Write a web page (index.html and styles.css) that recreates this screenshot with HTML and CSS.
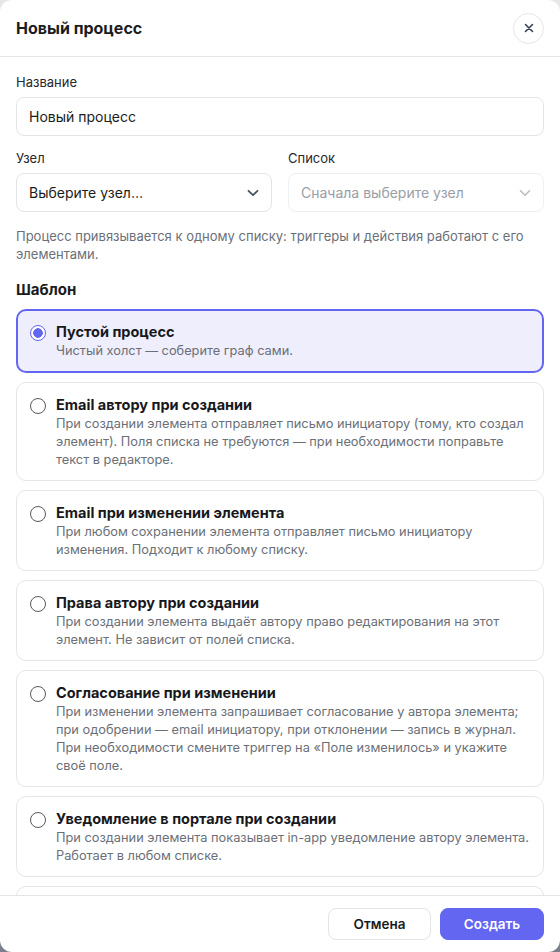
FILE: index.html
```html
<!DOCTYPE html>
<html lang="ru">
<head>
  <meta charset="UTF-8" />
  <meta name="viewport" content="width=device-width, initial-scale=1.0"/>
  <title>Новый процесс</title>
  <link rel="stylesheet" href="styles.css">
</head>
<body>
  <div class="modal">
    <header class="modal-head">
      <h1>Новый процесс</h1>
      <button class="close" aria-label="Закрыть">
        <svg width="10" height="10" viewBox="0 0 10 10"><path d="M1.5 1.5l7 7M8.5 1.5l-7 7" stroke="#374151" stroke-width="1.6" stroke-linecap="round"/></svg>
      </button>
    </header>

    <div class="modal-body">
      <div class="field">
        <label>Название</label>
        <div class="control">Новый процесс</div>
      </div>

      <div class="row">
        <div class="field">
          <label>Узел</label>
          <div class="control select">
            <span>Выберите узел…</span>
            <svg width="12" height="8" viewBox="0 0 12 8"><path d="M1.5 1.8l4.5 4.4 4.5-4.4" fill="none" stroke="#4b5563" stroke-width="1.8" stroke-linecap="round" stroke-linejoin="round"/></svg>
          </div>
        </div>
        <div class="field">
          <label>Список</label>
          <div class="control select disabled">
            <span>Сначала выберите узел</span>
            <svg width="12" height="8" viewBox="0 0 12 8"><path d="M1.5 1.8l4.5 4.4 4.5-4.4" fill="none" stroke="#b8bcc4" stroke-width="1.6" stroke-linecap="round" stroke-linejoin="round"/></svg>
          </div>
        </div>
      </div>

      <p class="hint">Процесс привязывается к одному списку: триггеры и действия работают с его элементами.</p>

      <h2>Шаблон</h2>

      <div class="templates">
        <div class="tpl selected">
          <span class="radio"></span>
          <div class="tpl-text">
            <div class="tpl-title">Пустой процесс</div>
            <div class="tpl-desc">Чистый холст — соберите граф сами.</div>
          </div>
        </div>
        <div class="tpl">
          <span class="radio"></span>
          <div class="tpl-text">
            <div class="tpl-title">Email автору при создании</div>
            <div class="tpl-desc">При создании элемента отправляет письмо инициатору (тому, кто создал элемент). Поля списка не требуются — при необходимости поправьте текст в редакторе.</div>
          </div>
        </div>
        <div class="tpl">
          <span class="radio"></span>
          <div class="tpl-text">
            <div class="tpl-title">Email при изменении элемента</div>
            <div class="tpl-desc">При любом сохранении элемента отправляет письмо инициатору изменения. Подходит к любому списку.</div>
          </div>
        </div>
        <div class="tpl">
          <span class="radio"></span>
          <div class="tpl-text">
            <div class="tpl-title">Права автору при создании</div>
            <div class="tpl-desc">При создании элемента выдаёт автору право редактирования на этот элемент. Не зависит от полей списка.</div>
          </div>
        </div>
        <div class="tpl">
          <span class="radio"></span>
          <div class="tpl-text">
            <div class="tpl-title">Согласование при изменении</div>
            <div class="tpl-desc">При изменении элемента запрашивает согласование у автора элемента; при одобрении — email инициатору, при отклонении — запись в журнал. При необходимости смените триггер на «Поле изменилось» и укажите своё поле.</div>
          </div>
        </div>
        <div class="tpl">
          <span class="radio"></span>
          <div class="tpl-text">
            <div class="tpl-title">Уведомление в портале при создании</div>
            <div class="tpl-desc">При создании элемента показывает in-app уведомление автору элемента. Работает в любом списке.</div>
          </div>
        </div>
        <div class="tpl">
          <span class="radio"></span>
          <div class="tpl-text">
            <div class="tpl-title">Задача при создании</div>
            <div class="tpl-desc">При создании элемента назначает задачу автору элемента.</div>
          </div>
        </div>
      </div>
    </div>

    <footer class="modal-foot">
      <button class="btn">Отмена</button>
      <button class="btn primary">Создать</button>
    </footer>
  </div>
</body>
</html>
```

FILE: styles.css
```css
* {
  box-sizing: border-box;
}

html, body {
  height: 100%;
}

body {
  margin: 0;
  font-family: Inter, 'Noto Sans', sans-serif;
  color: #1a1c20;
  background: linear-gradient(to bottom, #e6e7e9, #7a7f8a);
}

.modal {
  height: 100vh;
  display: flex;
  flex-direction: column;
  background: #fff;
  border-radius: 12px;
  overflow: hidden;
}

.modal-head {
  flex: none;
  height: 57px;
  display: flex;
  align-items: center;
  justify-content: space-between;
  padding: 0 16px;
  border-bottom: 1px solid #e4e5e8;
}

.modal-head h1 {
  margin: 0;
  font-size: 16px;
  font-weight: 700;
}

.close {
  width: 31px;
  height: 31px;
  border-radius: 50%;
  border: 1px solid #e5e6e9;
  background: #fff;
  display: flex;
  align-items: center;
  justify-content: center;
  padding: 0;
}

.modal-body {
  flex: 1;
  overflow: hidden;
  padding: 16px 16px 0;
}

.field label {
  display: block;
  font-size: 13px;
  line-height: 18px;
  color: #26282c;
  margin-bottom: 6px;
}

.control {
  height: 39px;
  border: 1px solid #e3e4e7;
  border-radius: 8px;
  padding: 0 12px;
  display: flex;
  align-items: center;
  font-size: 14px;
  color: #1a1c20;
}

.select {
  justify-content: space-between;
  padding-right: 12px;
}

.select.disabled {
  color: #9a9ea6;
  border-color: #eeeff1;
}

.row {
  display: grid;
  grid-template-columns: 1fr 1fr;
  gap: 16px;
  margin-top: 13px;
}

.hint {
  margin: 15px 0 0;
  font-size: 13px;
  line-height: 18px;
  color: #6b6f78;
}

h2 {
  margin: 17px 0 9px;
  font-size: 15px;
  line-height: 20px;
  font-weight: 700;
}

.templates {
  display: flex;
  flex-direction: column;
  gap: 9px;
}

.tpl {
  display: flex;
  gap: 10px;
  padding: 12px 13px 11px;
  border: 1px solid #e5e6e9;
  border-radius: 10px;
}

.tpl.selected {
  border: 2px solid #6366f1;
  background: #eeeefc;
  padding: 11px 12px 11px;
}

.radio {
  flex: none;
  width: 16px;
  height: 16px;
  margin-top: 3px;
  border-radius: 50%;
  border: 1.5px solid #55585f;
  background: #fff;
}

.selected .radio {
  border-color: #6366f1;
  background: radial-gradient(circle, #6366f1 0 4.5px, #fff 5px);
}

.tpl-title {
  font-size: 14.5px;
  line-height: 20px;
  font-weight: 700;
  color: #17181b;
}

.tpl-desc {
  font-size: 12.8px;
  line-height: 18px;
  color: #6b6f78;
}

.modal-foot {
  flex: none;
  height: 57px;
  border-top: 1px solid #e4e5e8;
  display: flex;
  justify-content: flex-end;
  align-items: center;
  gap: 9px;
  padding: 0 16px;
}

.btn {
  height: 32px;
  width: 103px;
  border-radius: 8px;
  border: 1px solid #e3e4e7;
  background: #fff;
  font-family: inherit;
  font-size: 13.5px;
  font-weight: 600;
  color: #1a1c20;
}

.btn.primary {
  width: 104px;
  background: #6366f1;
  border-color: #6366f1;
  color: #fff;
}
```
